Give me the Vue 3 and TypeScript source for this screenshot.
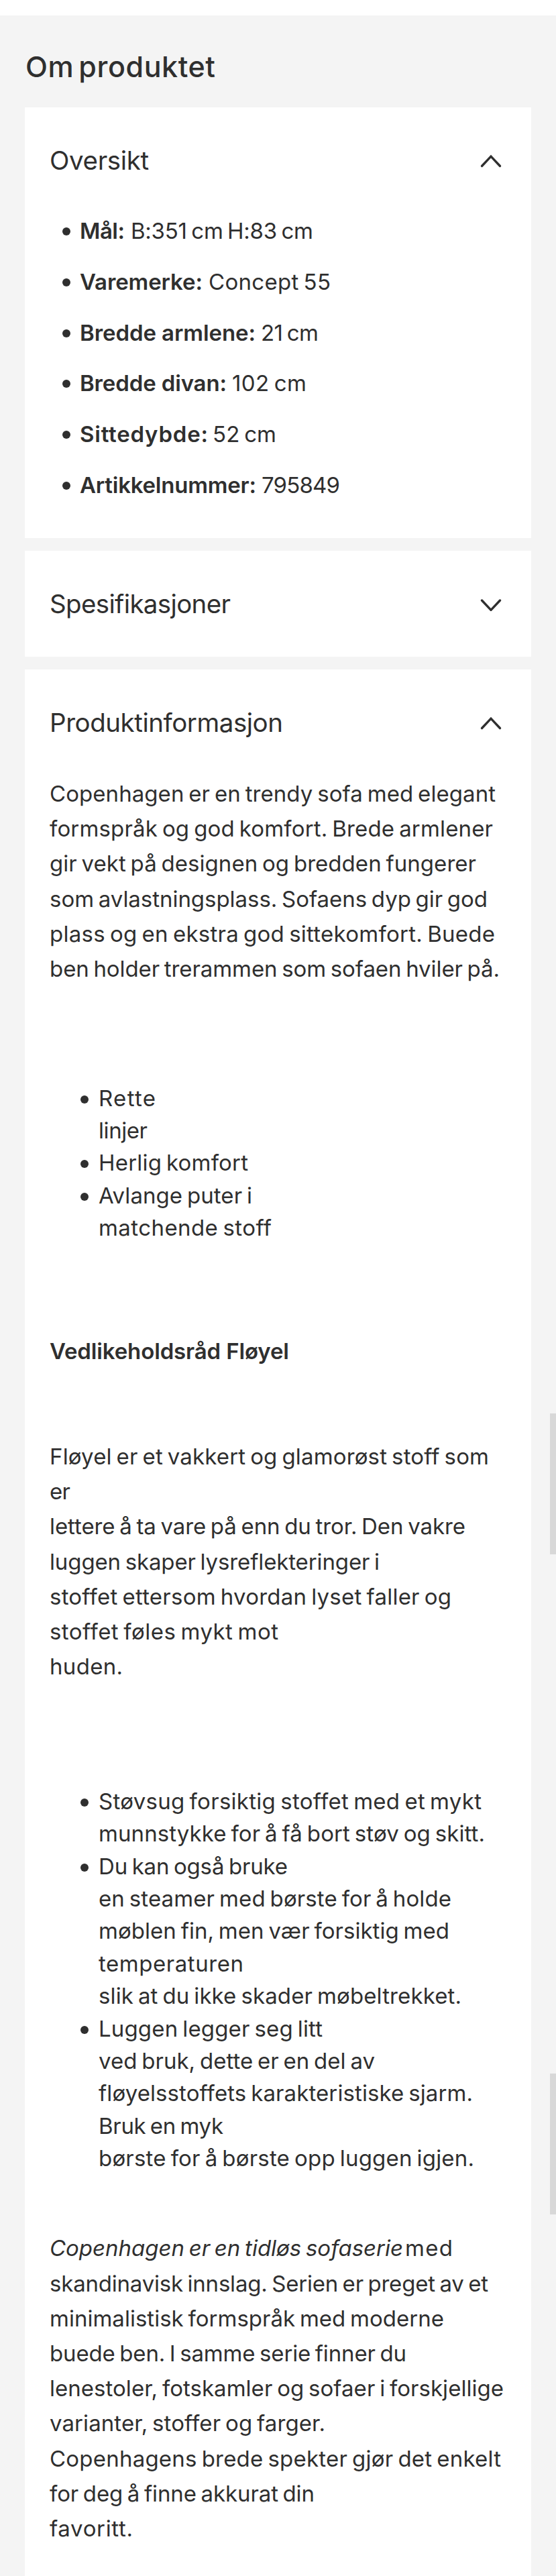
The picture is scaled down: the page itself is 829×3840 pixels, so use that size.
<script setup lang="ts">
interface Line {
  text: string
  width: number
  italic?: string
  italicWidth?: number
}

interface Spec {
  label: string
  labelWidth: number
  offset: number
  value: string
  valueWidth: number
}

const specs: Spec[] = [
  { label: 'Mål:', labelWidth: 67, offset: 76, value: 'B:351 cm H:83 cm', valueWidth: 272 },
  { label: 'Varemerke:', labelWidth: 183, offset: 192, value: 'Concept 55', valueWidth: 182 },
  { label: 'Bredde armlene:', labelWidth: 262, offset: 270, value: '21 cm', valueWidth: 86 },
  { label: 'Bredde divan:', labelWidth: 219, offset: 227, value: '102 cm', valueWidth: 111 },
  { label: 'Sittedybde:', labelWidth: 191, offset: 198, value: '52 cm', valueWidth: 95 },
  { label: 'Artikkelnummer:', labelWidth: 263, offset: 271, value: '795849', valueWidth: 117 },
]

const intro: Line[] = [
  { text: 'Copenhagen er en trendy sofa med elegant', width: 665 },
  { text: 'formspråk og god komfort. Brede armlener', width: 661 },
  { text: 'gir vekt på designen og bredden fungerer', width: 636 },
  { text: 'som avlastningsplass. Sofaens dyp gir god', width: 653 },
  { text: 'plass og en ekstra god sittekomfort. Buede', width: 664 },
  { text: 'ben holder trerammen som sofaen hviler på.', width: 671 },
]

const features: Line[][] = [
  [
    { text: 'Rette', width: 85 },
    { text: 'linjer', width: 73 },
  ],
  [{ text: 'Herlig komfort', width: 223 }],
  [
    { text: 'Avlange puter i', width: 229 },
    { text: 'matchende stoff', width: 258 },
  ],
]

const care: Line[] = [
  { text: 'Fløyel er et vakkert og glamorøst stoff som', width: 655 },
  { text: 'er', width: 31 },
  { text: 'lettere å ta vare på enn du tror. Den vakre', width: 620 },
  { text: 'luggen skaper lysreflekteringer i', width: 492 },
  { text: 'stoffet ettersom hvordan lyset faller og', width: 599 },
  { text: 'stoffet føles mykt mot', width: 341 },
  { text: 'huden.', width: 109 },
]

const tips: Line[][] = [
  [
    { text: 'Støvsug forsiktig stoffet med et mykt', width: 571 },
    { text: 'munnstykke for å få bort støv og skitt.', width: 576 },
  ],
  [
    { text: 'Du kan også bruke', width: 282 },
    { text: 'en steamer med børste for å holde', width: 526 },
    { text: 'møblen fin, men vær forsiktig med', width: 523 },
    { text: 'temperaturen', width: 216 },
    { text: 'slik at du ikke skader møbeltrekket.', width: 541 },
  ],
  [
    { text: 'Luggen legger seg litt', width: 334 },
    { text: 'ved bruk, dette er en del av', width: 412 },
    { text: 'fløyelsstoffets karakteristiske sjarm.', width: 558 },
    { text: 'Bruk en myk', width: 186 },
    { text: 'børste for å børste opp luggen igjen.', width: 560 },
  ],
]

const series: Line[] = [
  { italic: 'Copenhagen er en tidløs sofaserie', italicWidth: 527, text: 'med', width: 71 },
  { text: 'skandinavisk innslag. Serien er preget av et', width: 654 },
  { text: 'minimalistisk formspråk med moderne', width: 588 },
  { text: 'buede ben. I samme serie finner du', width: 532 },
  { text: 'lenestoler, fotskamler og sofaer i forskjellige', width: 677 },
  { text: 'varianter, stoffer og farger.', width: 411 },
  { text: 'Copenhagens brede spekter gjør det enkelt', width: 673 },
  { text: 'for deg å finne akkurat din', width: 395 },
  { text: 'favoritt.', width: 124 },
]

// Tracks a line of text so that it fills the given measure.
const vFit = {
  mounted(el: HTMLElement, binding: { value: number }) {
    const count = (el.textContent ?? '').trim().length
    el.style.width = 'auto'
    const natural = el.getBoundingClientRect().width
    el.style.width = ''
    el.style.letterSpacing = `${((binding.value - natural) / Math.max(count - 1, 1)).toFixed(3)}px`
  },
}
</script>

<template>
  <main class="page">
    <h1 class="page-title"><span v-fit="283" class="fit">Om produktet</span></h1>

    <section class="card card-overview">
      <header class="card-head">
        <h2><span v-fit="148" class="fit">Oversikt</span></h2>
        <svg class="chevron" viewBox="0 0 32 20"><path d="M2.5 17.5 16 3.2 29.5 17.5" /></svg>
      </header>
      <ul class="specs">
        <li v-for="s in specs" :key="s.label">
          <span class="label" :style="{ width: s.offset + 'px' }"><strong v-fit="s.labelWidth" class="fit">{{ s.label }}</strong></span>
          <span v-fit="s.valueWidth" class="fit">{{ s.value }}</span>
        </li>
      </ul>
    </section>

    <section class="card">
      <header class="card-head">
        <h2><span v-fit="270" class="fit">Spesifikasjoner</span></h2>
        <svg class="chevron" viewBox="0 0 32 20"><path d="M2.5 4 16 18.3 29.5 4" /></svg>
      </header>
    </section>

    <section class="card card-info">
      <header class="card-head">
        <h2><span v-fit="348" class="fit">Produktinformasjon</span></h2>
        <svg class="chevron" viewBox="0 0 32 20"><path d="M2.5 17.5 16 3.2 29.5 17.5" /></svg>
      </header>
      <p class="intro">
        <span v-for="l in intro" :key="l.text" class="line"><span v-fit="l.width" class="fit">{{ l.text }}</span></span>
      </p>
      <ul class="bullets features">
        <li v-for="(item, i) in features" :key="i">
          <span v-for="l in item" :key="l.text" class="line"><span v-fit="l.width" class="fit">{{ l.text }}</span></span>
        </li>
      </ul>
      <h3><span v-fit="357" class="fit">Vedlikeholdsråd Fløyel</span></h3>
      <p class="care">
        <span v-for="l in care" :key="l.text" class="line"><span v-fit="l.width" class="fit">{{ l.text }}</span></span>
      </p>
      <ul class="bullets tips">
        <li v-for="(item, i) in tips" :key="i">
          <span v-for="l in item" :key="l.text" class="line"><span v-fit="l.width" class="fit">{{ l.text }}</span></span>
        </li>
      </ul>
      <p class="series">
        <span v-for="l in series" :key="l.text" class="line"><em v-if="l.italic" v-fit="l.italicWidth ?? 0" class="fit lead">{{ l.italic }}</em><span v-fit="l.width" class="fit">{{ l.text }}</span></span>
      </p>
    </section>

    <div class="thumb thumb-upper"></div>
    <div class="thumb thumb-lower"></div>
  </main>
</template>

<style>
html,
body {
  margin: 0;
  background: #fff;
}
</style>

<style scoped>
.page {
  position: relative;
  box-sizing: border-box;
  width: 829px;
  height: 3840px;
  padding: 0 37px;
  border-top: 23px solid #fff;
  background: #f4f4f4;
  color: #2f2f2f;
  font-family: Inter, 'Liberation Sans', sans-serif;
  font-size: 33px;
  line-height: 52.2px;
  overflow: hidden;
  display: flex;
  flex-direction: column;
}
h1,
h2,
h3,
p,
ul {
  margin: 0;
  padding: 0;
}
ul {
  list-style: none;
}
.fit {
  display: inline-block;
  white-space: nowrap;
  word-spacing: -2.5px;
}
.page-title {
  flex: none;
  height: 137px;
  box-sizing: border-box;
  padding: 46px 0 0 1px;
  font-size: 43px;
  line-height: 60px;
  font-weight: 500;
}
.page-title .fit {
  word-spacing: -5px;
}
.card {
  flex: none;
  box-sizing: border-box;
  width: 755px;
  margin-bottom: 19px;
  padding: 0 37px;
  background: #fff;
}
.card-overview {
  height: 642px;
}
.card-info {
  height: 2860px;
  margin-bottom: 0;
}
.card-head {
  display: flex;
  align-items: center;
  justify-content: space-between;
  height: 158px;
}
.card-head h2 {
  font-size: 38.5px;
  line-height: 50px;
  font-weight: 400;
}
.chevron {
  width: 32px;
  height: 20px;
  margin-right: 7.5px;
  margin-top: 1px;
  fill: none;
  stroke: #2f2f2f;
  stroke-width: 3.4;
  stroke-linecap: round;
  stroke-linejoin: miter;
}
.specs {
  display: flex;
  flex-direction: column;
  gap: 23.8px;
  padding-left: 45px;
}
.specs li {
  display: flex;
  height: 52px;
  line-height: 52px;
}
.label {
  flex: none;
}
strong {
  font-weight: 600;
}
strong.fit,
h3 .fit {
  word-spacing: 0;
}
li {
  position: relative;
}
li::before {
  content: '';
  position: absolute;
  left: -26.5px;
  top: 21px;
  width: 12px;
  height: 12px;
  border-radius: 50%;
  background: #2f2f2f;
}
.line {
  display: block;
  height: 52.2px;
}
.intro {
  padding-top: 1px;
}
.bullets {
  padding-left: 73px;
  line-height: 48.4px;
}
.bullets .line {
  height: 48.4px;
}
.bullets li::before {
  left: -27px;
  top: 20px;
}
.features {
  margin-top: 142.4px;
}
h3 {
  height: 52.2px;
  margin-top: 133.5px;
  font-size: 33px;
  font-weight: 600;
}
.care {
  margin-top: 104.8px;
}
.tips {
  margin-top: 150.5px;
}
.series {
  margin-top: 84px;
}
.lead {
  width: 530px;
}
.thumb {
  position: absolute;
  right: 0;
  width: 9px;
  height: 210px;
  background: #d8d8d8;
}
.thumb-upper {
  top: 2084px;
}
.thumb-lower {
  top: 3068px;
}
</style>
